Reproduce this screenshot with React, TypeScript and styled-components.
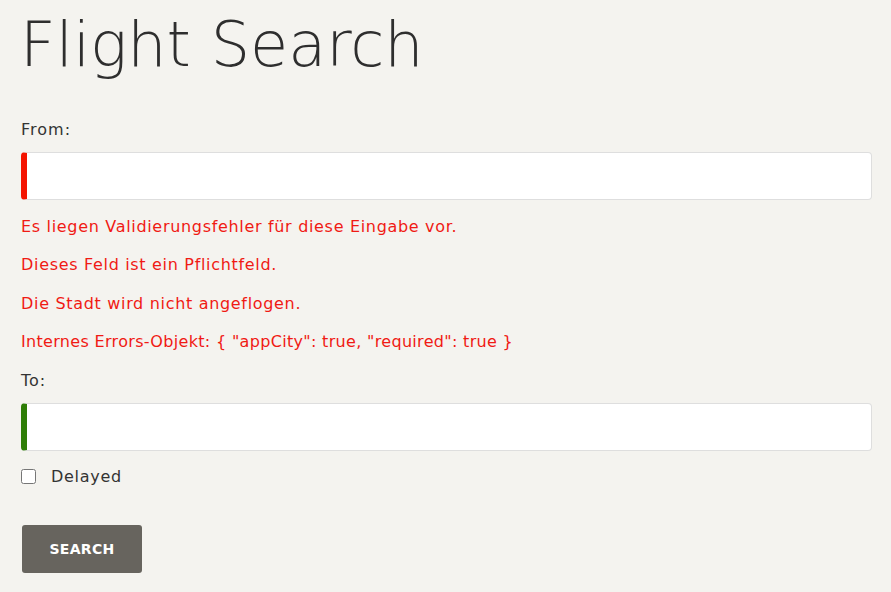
import React from "react";
import styled, { createGlobalStyle } from "styled-components";

const GlobalStyle = createGlobalStyle`
  html, body { margin: 0; padding: 0; background: #f4f3ef; }
  body { font-family: "DejaVu Sans", sans-serif; color: #333; }
`;

const Page = styled.form`
  display: flex;
  flex-direction: column;
  padding: 8px 19px 0 21px;
`;

const Title = styled.h1`
  margin: 0 0 37px -1px;
  font-family: "DejaVu Sans", sans-serif;
  font-weight: 200;
  font-size: 62px;
  line-height: 73px;
  color: #2e2e2e;
  letter-spacing: 0;
`;

const Label = styled.label`
  display: block;
  font-size: 16px;
  line-height: 24px;
  letter-spacing: 1px;
  color: #333;
  margin-bottom: 10px;
`;

const Input = styled.input<{ $valid: boolean }>`
  box-sizing: border-box;
  width: 100%;
  height: 48px;
  margin: 0;
  padding: 0 12px;
  background: #fff;
  border: 1px solid #dedede;
  border-left: 6px solid ${(p) => (p.$valid ? "#2e7d06" : "#f41400")};
  border-radius: 4px;
  font-family: "DejaVu Sans", sans-serif;
  font-size: 16px;
  outline: none;
`;

const Errors = styled.div`
  display: flex;
  flex-direction: column;
  gap: 14.3px;
  margin-top: 15px;
  margin-bottom: 15px;
`;

const ErrorText = styled.div<{ $spacing?: number }>`
  font-size: 16px;
  line-height: 24px;
  letter-spacing: ${(p) => p.$spacing ?? 0.68}px;
  color: #f01a14;
  white-space: nowrap;
`;

const CheckRow = styled.label`
  display: flex;
  align-items: center;
  gap: 15px;
  margin-top: 14px;
  font-size: 16px;
  line-height: 24px;
  letter-spacing: 0.7px;
  color: #333;
`;

const Check = styled.input`
  width: 15px;
  height: 15px;
  margin: 0;
  accent-color: #67645e;
`;

const Button = styled.button`
  align-self: flex-start;
  margin: 36px 0 0 1px;
  width: 120px;
  height: 48px;
  border: none;
  border-radius: 3px;
  background: #67645e;
  color: #fff;
  font-family: "DejaVu Sans", sans-serif;
  font-weight: 700;
  font-size: 14px;
  letter-spacing: 0.3px;
  text-transform: uppercase;
  cursor: pointer;
`;

const Field = styled.div`
  display: flex;
  flex-direction: column;
`;

export default function App() {
  return (
    <>
      <GlobalStyle />
      <Page onSubmit={(e) => e.preventDefault()}>
        <Title>Flight Search</Title>
        <Field>
          <Label htmlFor="from">From:</Label>
          <Input id="from" $valid={false} />
        </Field>
        <Errors>
          <ErrorText>Es liegen Validierungsfehler für diese Eingabe vor.</ErrorText>
          <ErrorText>Dieses Feld ist ein Pflichtfeld.</ErrorText>
          <ErrorText>Die Stadt wird nicht angeflogen.</ErrorText>
          <ErrorText $spacing={0.32}>
            Internes Errors-Objekt: {'{ "appCity": true, "required": true }'}
          </ErrorText>
        </Errors>
        <Field>
          <Label htmlFor="to">To:</Label>
          <Input id="to" $valid={true} />
        </Field>
        <CheckRow>
          <Check type="checkbox" />
          Delayed
        </CheckRow>
        <Button type="submit">Search</Button>
      </Page>
    </>
  );
}
